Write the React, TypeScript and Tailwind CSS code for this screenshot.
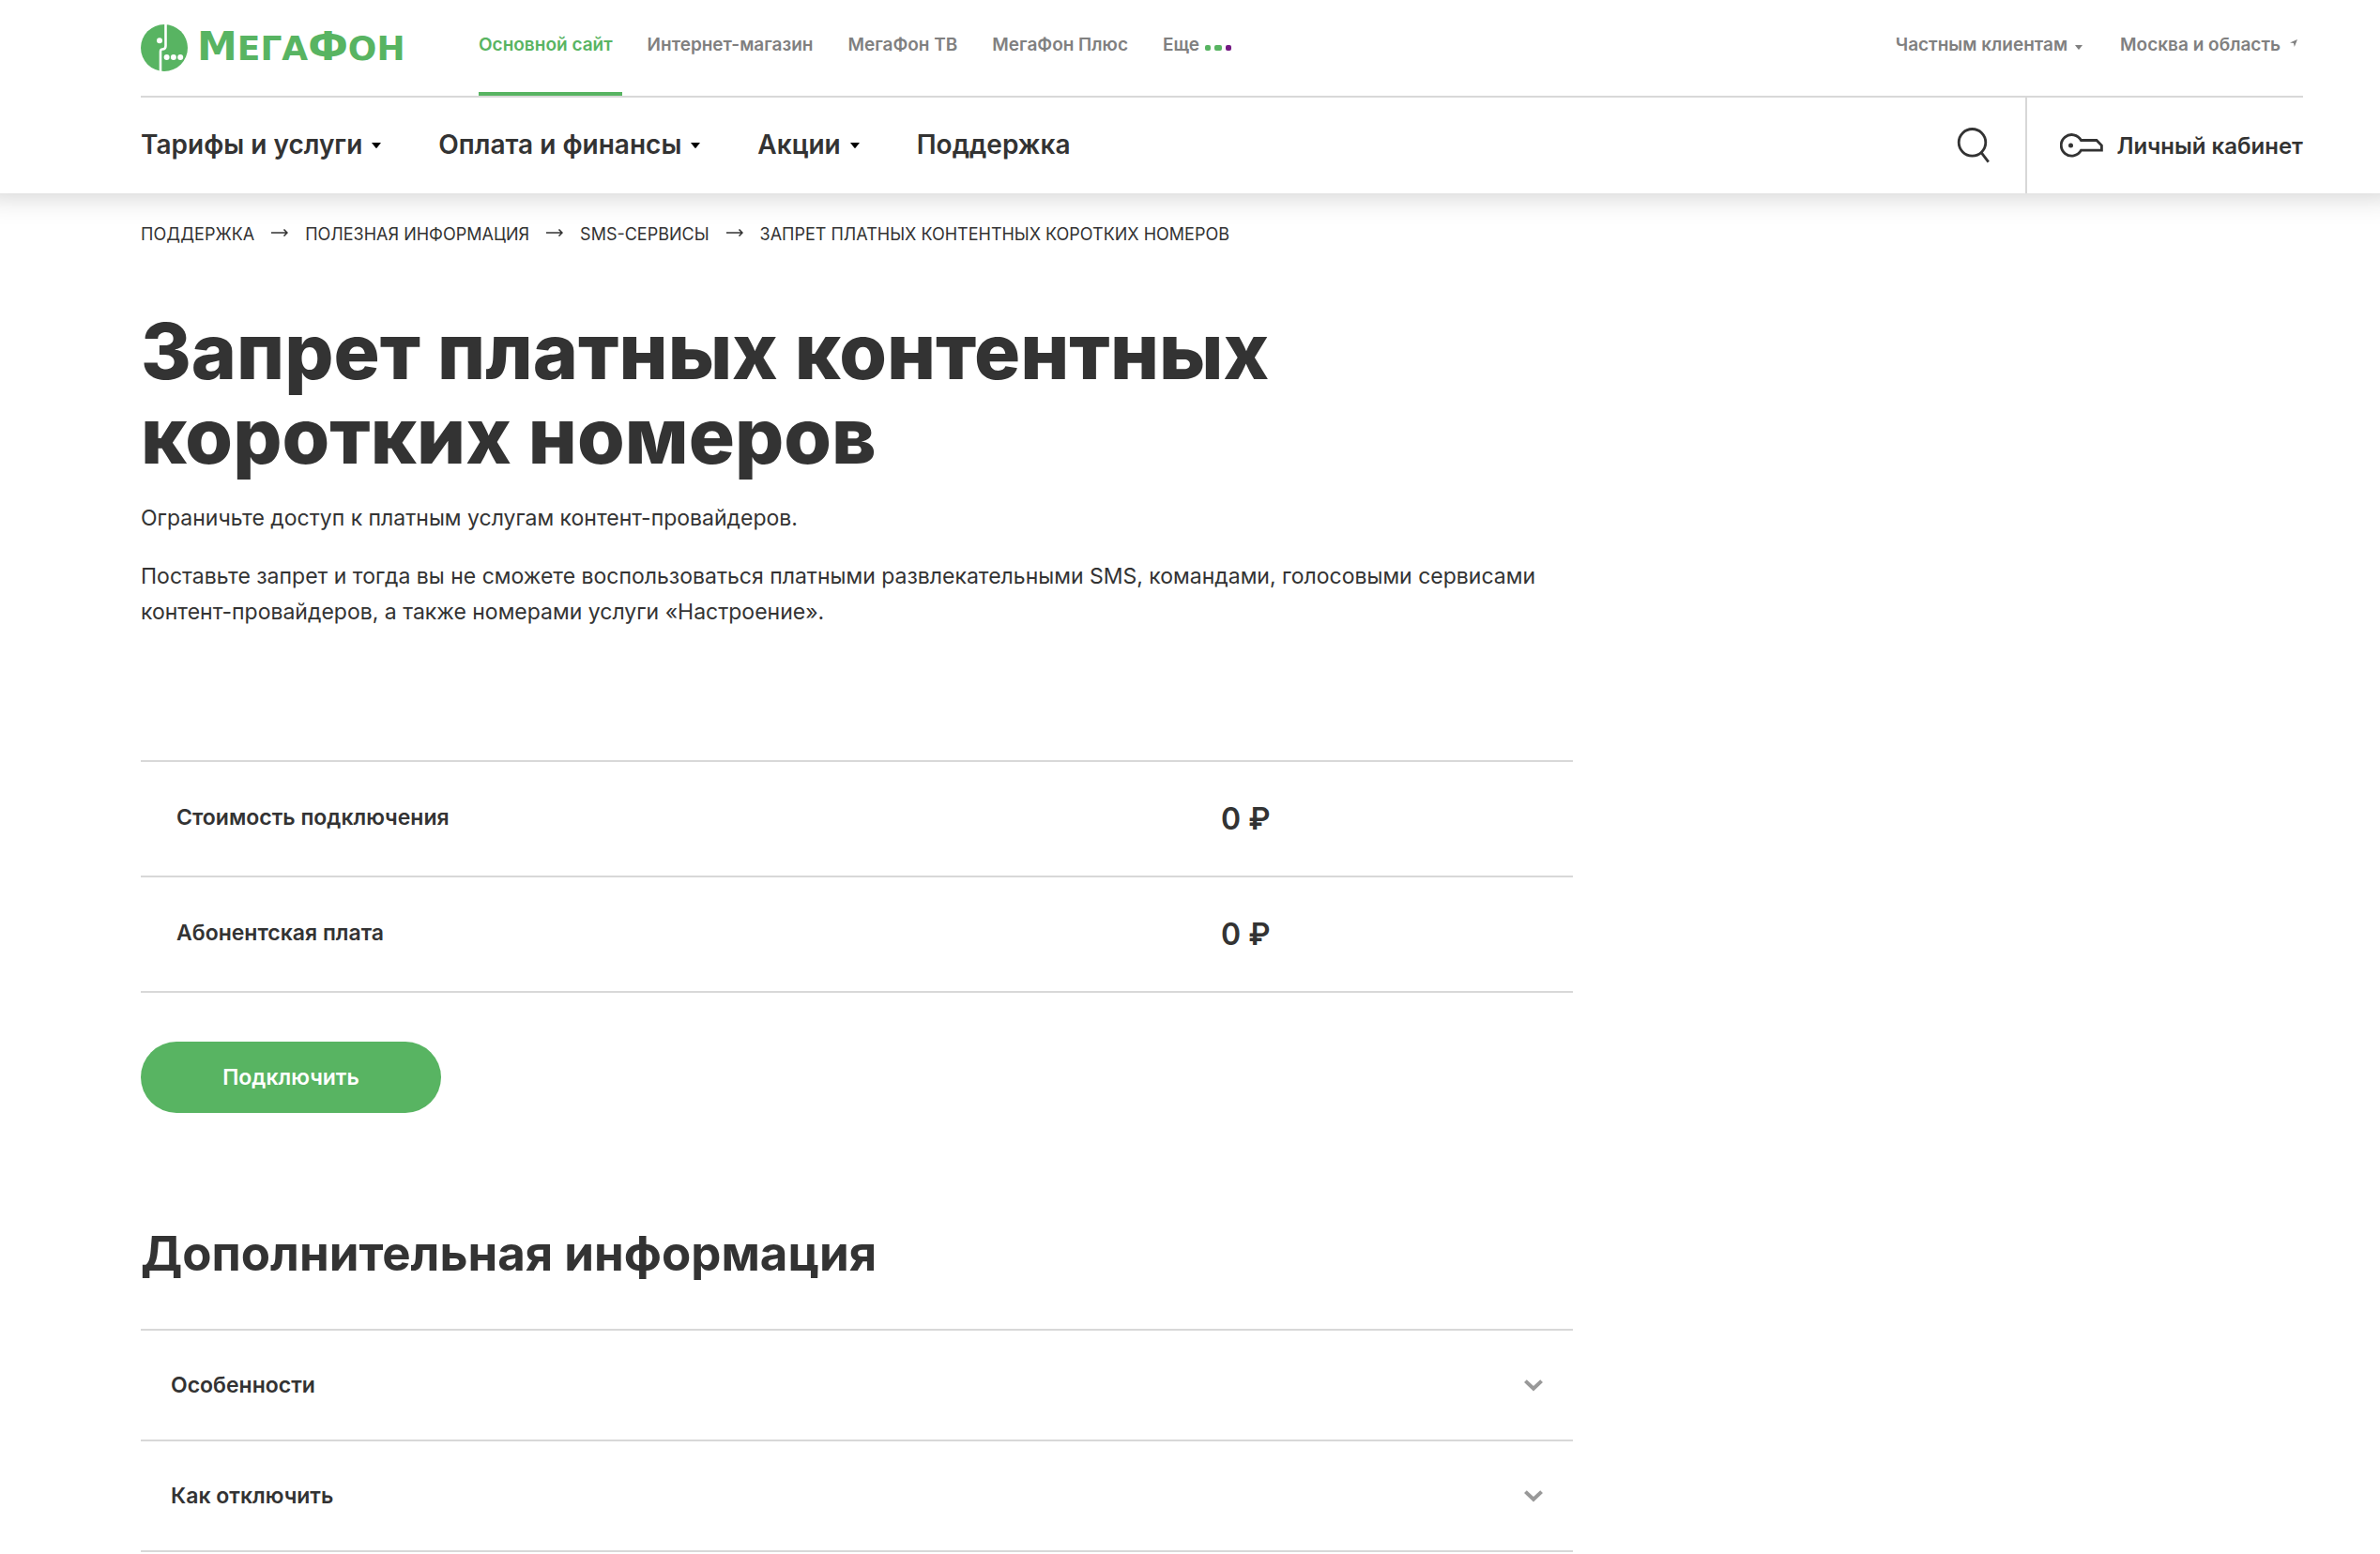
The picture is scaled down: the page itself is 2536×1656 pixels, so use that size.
import type { ReactNode } from 'react';

const siteLinks = ['Основной сайт', 'Интернет-магазин', 'МегаФон ТВ', 'МегаФон Плюс'];
const menu = [
  { label: 'Тарифы и услуги', nested: true },
  { label: 'Оплата и финансы', nested: true },
  { label: 'Акции', nested: true },
  { label: 'Поддержка', nested: false },
];
const crumbs = ['Поддержка', 'Полезная информация', 'SMS-сервисы', 'Запрет платных контентных коротких номеров'];
const prices = [
  { label: 'Стоимость подключения', value: '0 ₽' },
  { label: 'Абонентская плата', value: '0 ₽' },
];
const sections = ['Особенности', 'Как отключить'];

function Caret({ className }: { className: string }) {
  return (
    <svg viewBox="0 0 10 6" className={className} fill="currentColor" aria-hidden="true">
      <path d="M0 0h10L5.7 5.5q-.7.8-1.4 0z" />
    </svg>
  );
}

function Logo() {
  return (
    <a href="#" aria-label="МегаФон" className="flex h-[54px] w-[300px] shrink-0 items-center text-[#58b462]">
      <svg viewBox="0 0 50 50" className="size-[50px] shrink-0" aria-hidden="true">
        <circle cx="25" cy="25" r="25" fill="currentColor" />
        <path d="M26.5 -1V23Q26.5 26.5 23 26.5Q21 26.5 21 29V51" fill="none" stroke="#fff" strokeWidth="2.6" />
        <g fill="#fff">
          <circle cx="20" cy="17.3" r="3" />
          <circle cx="27.6" cy="35" r="3" />
          <circle cx="34.9" cy="35" r="3" />
          <circle cx="42.2" cy="35" r="3" />
        </g>
      </svg>
      <span className="ml-2.5 pb-1 font-['DejaVu_Sans',sans-serif] text-[36px] leading-none font-bold">
        <span className="text-[43px]">М</span>ЕГА<span className="text-[43px]">Ф</span>ОН
      </span>
    </a>
  );
}

function TopLink({ active, children }: { active?: boolean; children: ReactNode }) {
  return (
    <a
      href="#"
      className={
        active
          ? 'flex h-[102px] items-start border-b-4 border-[#58b462] pt-9 pr-2.5 text-[#58b462]'
          : 'flex h-[102px] items-start pt-9 pr-2.5'
      }
    >
      {children}
    </a>
  );
}

export default function App() {
  return (
    <div className="min-h-screen overflow-x-hidden bg-white font-['Inter',sans-serif] text-[#333]">
      <header className="pr-[82px] pl-[150px] shadow-[0_-20px_30px_20px_rgba(0,0,0,0.22)]">
        <div className="flex border-b-2 border-[#d8d8d8] text-[19px] leading-6 font-semibold text-[#808080]">
          <div className="w-[360px] shrink-0 pt-6">
            <Logo />
          </div>
          <nav aria-label="Сайты" className="flex gap-[27px]">
            {siteLinks.map((label, i) => (
              <TopLink key={label} active={i === 0}>
                {label}
              </TopLink>
            ))}
            <button className="flex h-[102px] items-start gap-1.5 pt-9">
              Еще
              <span className="mt-3 flex gap-1" aria-hidden="true">
                <i className="h-1.5 w-1.5 rounded-xs bg-[#58b462]" />
                <i className="h-1.5 w-2 rounded-xs bg-[#58b462]" />
                <i className="h-1.5 w-1.5 rounded-xs bg-[#731982]" />
              </span>
            </button>
          </nav>
          <div className="ml-auto flex items-start gap-10 pt-9 pr-1.5">
            <button className="flex gap-2">
              Частным клиентам
              <Caret className="mt-3 h-[5px] w-2" />
            </button>
            <button className="flex gap-2.5">
              Москва и область
              <svg viewBox="0 0 8 8" className="mt-1.5 size-2" fill="currentColor" aria-hidden="true">
                <path d="M8 0L4.8 8L4 4L0 3.4Z" />
              </svg>
            </button>
          </div>
        </div>
        <div className="flex h-[102px] items-center">
          <nav aria-label="Основное меню" className="flex gap-[61px] pb-0.5 text-[28px] leading-9 font-semibold">
            {menu.map((item) => (
              <a key={item.label} href="#" className="flex items-center gap-2.5">
                {item.label}
                {item.nested && <Caret className="mt-0.5 h-1.5 w-2.5 text-black" />}
              </a>
            ))}
          </nav>
          <div className="ml-auto flex items-center self-stretch">
            <button aria-label="Поиск" className="mr-[38px]">
              <svg viewBox="0 0 36 40" className="h-10 w-9" fill="none" stroke="currentColor" strokeWidth="2.8" aria-hidden="true">
                <circle cx="17.5" cy="16.8" r="14.3" />
                <path d="M26.8 27.2l8 10.4" />
              </svg>
            </button>
            <a href="#" className="flex items-center self-stretch border-l-2 border-[#d8d8d8] pl-[35px] text-[24px] leading-8 font-semibold">
              <svg viewBox="0 0 46 26" className="mr-3.5 h-[26px] w-[46px]" fill="none" stroke="currentColor" strokeWidth="2.8" aria-hidden="true">
                <path d="M22.5 7.5A11.3 11.3 0 1 0 22.5 18.2H44.4V13L39 7.5Z" />
                <circle cx="11.5" cy="13" r="2.5" fill="currentColor" stroke="none" />
              </svg>
              <span className="pt-0.5">Личный кабинет</span>
            </a>
          </div>
        </div>
      </header>

      <main className="pr-[82px] pl-[150px]">
        <nav aria-label="Навигационная цепочка" className="pt-8">
          <ol className="flex items-center text-[18px] leading-6 uppercase">
            {crumbs.map((crumb, i) => (
              <li key={crumb} className="flex items-center">
                {i > 0 && (
                  <svg viewBox="0 0 18 8" className="mx-[18px] mb-1 h-2 w-[18px]" fill="none" stroke="currentColor" strokeWidth="1.5" aria-hidden="true">
                    <path d="M0 4H17M13.5 .5L17 4L13.5 7.5" />
                  </svg>
                )}
                <a href="#">{crumb}</a>
              </li>
            ))}
          </ol>
        </nav>

        <div className="w-full max-w-[1526px]">
          <h1 className="mt-[68px] max-w-[1300px] text-[82px] leading-[90px] font-extrabold">
            Запрет платных контентных коротких номеров
          </h1>
          <p className="mt-[23px] text-[23px] leading-[38px]">Ограничьте доступ к платным услугам контент-провайдеров.</p>
          <p className="mt-6 text-[23px] leading-[38px]">
            Поставьте запрет и тогда вы не сможете воспользоваться платными развлекательными SMS, командами, голосовыми сервисами
            контент-провайдеров, а также номерами услуги «Настроение».
          </p>

          <table className="mt-[139px] w-full">
            <tbody>
              {prices.map((row) => (
                <tr key={row.label} className="h-[123px] border-y-2 border-[#d8d8d8]">
                  <th scope="row" className="pb-1 pl-[38px] text-left text-[23px] leading-8 font-semibold">
                    {row.label}
                  </th>
                  <td className="w-[375px] text-[32px] leading-10 font-semibold">{row.value}</td>
                </tr>
              ))}
            </tbody>
          </table>

          <button className="mt-[52px] h-[76px] w-80 rounded-full bg-[#58b462] text-[23px] font-semibold text-white">
            Подключить
          </button>

          <h2 className="mt-[118px] text-[51px] leading-[64px] font-bold">Дополнительная информация</h2>
          <div className="mt-12 border-t-2 border-[#d8d8d8]">
            {sections.map((title) => (
              <button
                key={title}
                aria-expanded="false"
                className="flex h-[118px] w-full items-center justify-between border-b-2 border-[#d8d8d8] pr-8 pl-8 text-[23px] font-semibold"
              >
                {title}
                <svg viewBox="0 0 20 13" className="h-[13px] w-5" fill="none" stroke="#999" strokeWidth="4" aria-hidden="true">
                  <path d="M1.4 1.6L10 9.8L18.6 1.6" />
                </svg>
              </button>
            ))}
          </div>
        </div>
      </main>
    </div>
  );
}
